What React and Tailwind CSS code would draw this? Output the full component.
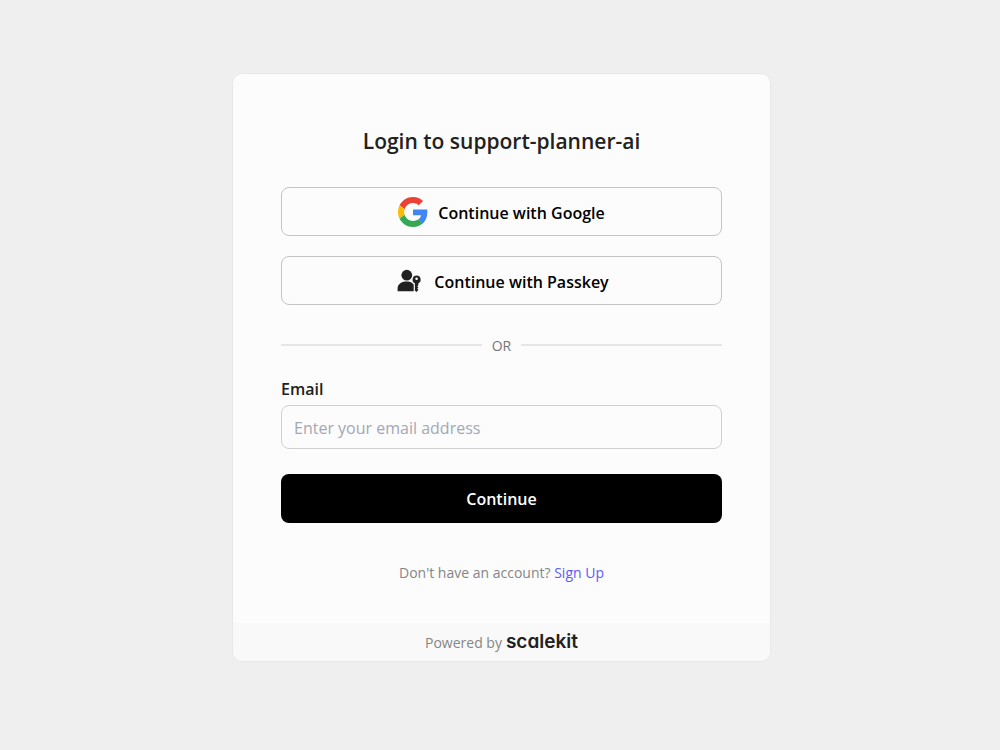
import React from "react";

function GoogleIcon() {
  return (
    <svg className="h-[30px] w-[30px]" viewBox="0 0 48 48" aria-hidden="true">
      <path
        fill="#EA4335"
        d="M24 9.5c3.54 0 6.71 1.22 9.21 3.6l6.85-6.85C35.9 2.38 30.47 0 24 0 14.62 0 6.51 5.38 2.56 13.22l7.98 6.19C12.43 13.72 17.74 9.5 24 9.5z"
      />
      <path
        fill="#4285F4"
        d="M46.98 24.55c0-1.57-.15-3.09-.38-4.55H24v9.02h12.94c-.58 2.96-2.26 5.48-4.78 7.18l7.73 6c4.51-4.18 7.09-10.36 7.09-17.65z"
      />
      <path
        fill="#FBBC05"
        d="M10.53 28.59c-.48-1.45-.76-2.99-.76-4.59s.27-3.14.76-4.59l-7.98-6.19C.92 16.46 0 20.12 0 24c0 3.88.92 7.54 2.56 10.78l7.97-6.19z"
      />
      <path
        fill="#34A853"
        d="M24 48c6.48 0 11.93-2.13 15.89-5.81l-7.73-6c-2.15 1.45-4.92 2.3-8.16 2.3-6.26 0-11.57-4.22-13.47-9.91l-7.98 6.19C6.51 42.62 14.62 48 24 48z"
      />
    </svg>
  );
}

function PasskeyIcon() {
  return (
    <svg className="h-6 w-[30px]" viewBox="-3 0 30 24" fill="#212121" aria-hidden="true">
      <circle cx="9.8" cy="6.2" r="5.4" />
      <path d="M.6 22.2v-2.6c0-4.3 3.7-7 8.8-7 2.3 0 4.2.5 5.8 1.4.4.6.9 1.1 1.5 1.5v6.7H.6z" />
      <path
        fillRule="evenodd"
        d="M19.6 6.6a4.1 4.1 0 0 1 1.7 7.8v1.8l-1 1.1 1.1 1.2-1.1 1.2 1.1 1.3-1.9 2-1.6-1.5v-7.1a4.1 4.1 0 0 1 1.7-7.8zm0 1.9a1.3 1.3 0 1 0 0 2.6 1.3 1.3 0 0 0 0-2.6z"
      />
    </svg>
  );
}

function ProviderButton({ icon, children }) {
  return (
    <button
      type="button"
      className="flex h-[49px] w-full items-center justify-center gap-2.5 rounded-lg border border-[#c4c4c4] text-[16px] font-semibold text-black"
    >
      {icon}
      <span className="pt-0.5">{children}</span>
    </button>
  );
}

export default function App() {
  return (
    <main className="min-h-screen bg-[#efefef] py-[73px] pr-4 pl-[19px] font-['Open_Sans',sans-serif] text-[#212121]">
      <div className="mx-auto max-w-[539px] overflow-hidden rounded-[10px] border border-[#e8e8e8] bg-[#fcfcfc]">
        <div className="px-12 pt-[51px] pb-[38px]">
          <h1 className="text-center text-[21px] leading-8 font-semibold">
            Login to support-planner-ai
          </h1>

          <div className="mt-[30px] flex flex-col gap-5">
            <ProviderButton icon={<GoogleIcon />}>Continue with Google</ProviderButton>
            <ProviderButton icon={<PasskeyIcon />}>Continue with Passkey</ProviderButton>
          </div>

          <div className="mt-7 flex items-center gap-2.5 text-[14px] leading-[22px] text-[#757575]">
            <span className="h-0.5 flex-1 bg-[#e6e6e6]" />
            <span className="pt-0.5">OR</span>
            <span className="h-0.5 flex-1 bg-[#e6e6e6]" />
          </div>

          <form className="mt-5" onSubmit={(e) => e.preventDefault()}>
            <label htmlFor="email" className="block text-[16px] leading-6 font-semibold">
              Email
            </label>
            <input
              id="email"
              type="email"
              placeholder="Enter your email address"
              className="mt-1 block h-11 w-full rounded-lg border border-[#d0d0d0] px-3 pt-0.5 text-[16px] placeholder:text-[#a3a7b4]"
            />
            <button
              type="submit"
              className="mt-[25px] h-[49px] w-full rounded-lg bg-black text-[16px] font-semibold text-white"
            >
              Continue
            </button>
          </form>

          <p className="mt-[38px] text-center text-[14px] leading-6 text-[#858585]">
            Don't have an account?{" "}
            <a href="#signup" className="text-[#5b5bff]">
              Sign Up
            </a>
          </p>
        </div>

        <footer className="flex h-[38px] items-center justify-center gap-1 bg-[#f9f9f9] text-[14px] text-[#858585]">
          <span>Powered by</span>
          <span className="pb-px font-['Inter',sans-serif] text-[19px] leading-6 font-semibold text-[#212121] [font-feature-settings:'cv11']">
            scalekit
          </span>
        </footer>
      </div>
    </main>
  );
}
